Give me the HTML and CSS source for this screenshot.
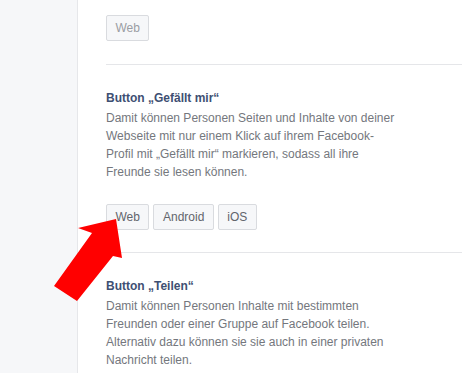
FILE: index.html
```html
<!DOCTYPE html>
<html lang="de">
<head>
  <meta charset="UTF-8">
  <title>Facebook Plugins</title>
  <link rel="stylesheet" href="styles.css">
</head>
<body>
  <div class="page">
    <div class="sidebar"></div>

    <div class="content">
      <!-- previous item, only its button is visible -->
      <div class="item item-top">
        <div class="buttons">
          <button class="btn btn-muted">Web</button>
        </div>
      </div>

      <div class="item">
        <h3>Button „Gefällt mir“</h3>
        <p>Damit können Personen Seiten und Inhalte von deiner Webseite mit nur einem Klick auf ihrem Facebook-Profil mit „Gefällt mir“ markieren, sodass all ihre Freunde sie lesen können.</p>
        <div class="buttons">
          <button class="btn">Web</button>
          <button class="btn">Android</button>
          <button class="btn">iOS</button>
        </div>
      </div>

      <div class="item">
        <h3>Button „Teilen“</h3>
        <p>Damit können Personen Inhalte mit bestimmten Freunden oder einer Gruppe auf Facebook teilen. Alternativ dazu können sie sie auch in einer privaten Nachricht teilen.</p>
      </div>
    </div>

    <!-- red marker arrow pointing at the Web button -->
    <svg class="arrow" width="80" height="95" viewBox="0 0 80 95">
      <polygon points="66,9 28,18 42,23 4,76 27,91 63,46 72,48" fill="#ff0000"/>
    </svg>
  </div>
</body>
</html>
```

FILE: styles.css
```css
* { margin: 0; padding: 0; box-sizing: border-box; }
body { background-color: #ffffff; font-family: 'Liberation Sans', Arial, Helvetica, sans-serif; color: #6f7278; overflow: hidden; }
.page { position: relative; display: flex; width: 462px; height: 373px; }
.sidebar { width: 78px; flex-shrink: 0; background-color: #f6f7f9; border-right: 1px solid #e6e7ea; }
.content { flex: 1; padding-left: 28px; }
.item { padding: 24px 0 22px; border-bottom: 1px solid #e5e6e9; }
.item-top { padding-top: 15px; padding-bottom: 23px; }
.item:last-child { border-bottom: none; }
.item h3 { font-size: 12px; line-height: 18px; font-weight: bold; color: #3e4f72; margin-bottom: 2px; }
.item p { font-size: 12px; line-height: 18px; color: #74777d; max-width: 290px; }
.buttons { display: flex; gap: 4px; }
.item p + .buttons { margin-top: 23px; }
.btn {
  font-family: 'Liberation Sans', Arial, Helvetica, sans-serif;
  font-size: 12px;
  height: 26px;
  padding: 0 8.5px;
  background-color: #f6f7f9;
  border: 1px solid #d9dbdf;
  border-radius: 2px;
  color: #62656c;
}
.btn-muted { color: #9a9da3; }
.arrow { position: absolute; left: 50px; top: 210px; }
```
